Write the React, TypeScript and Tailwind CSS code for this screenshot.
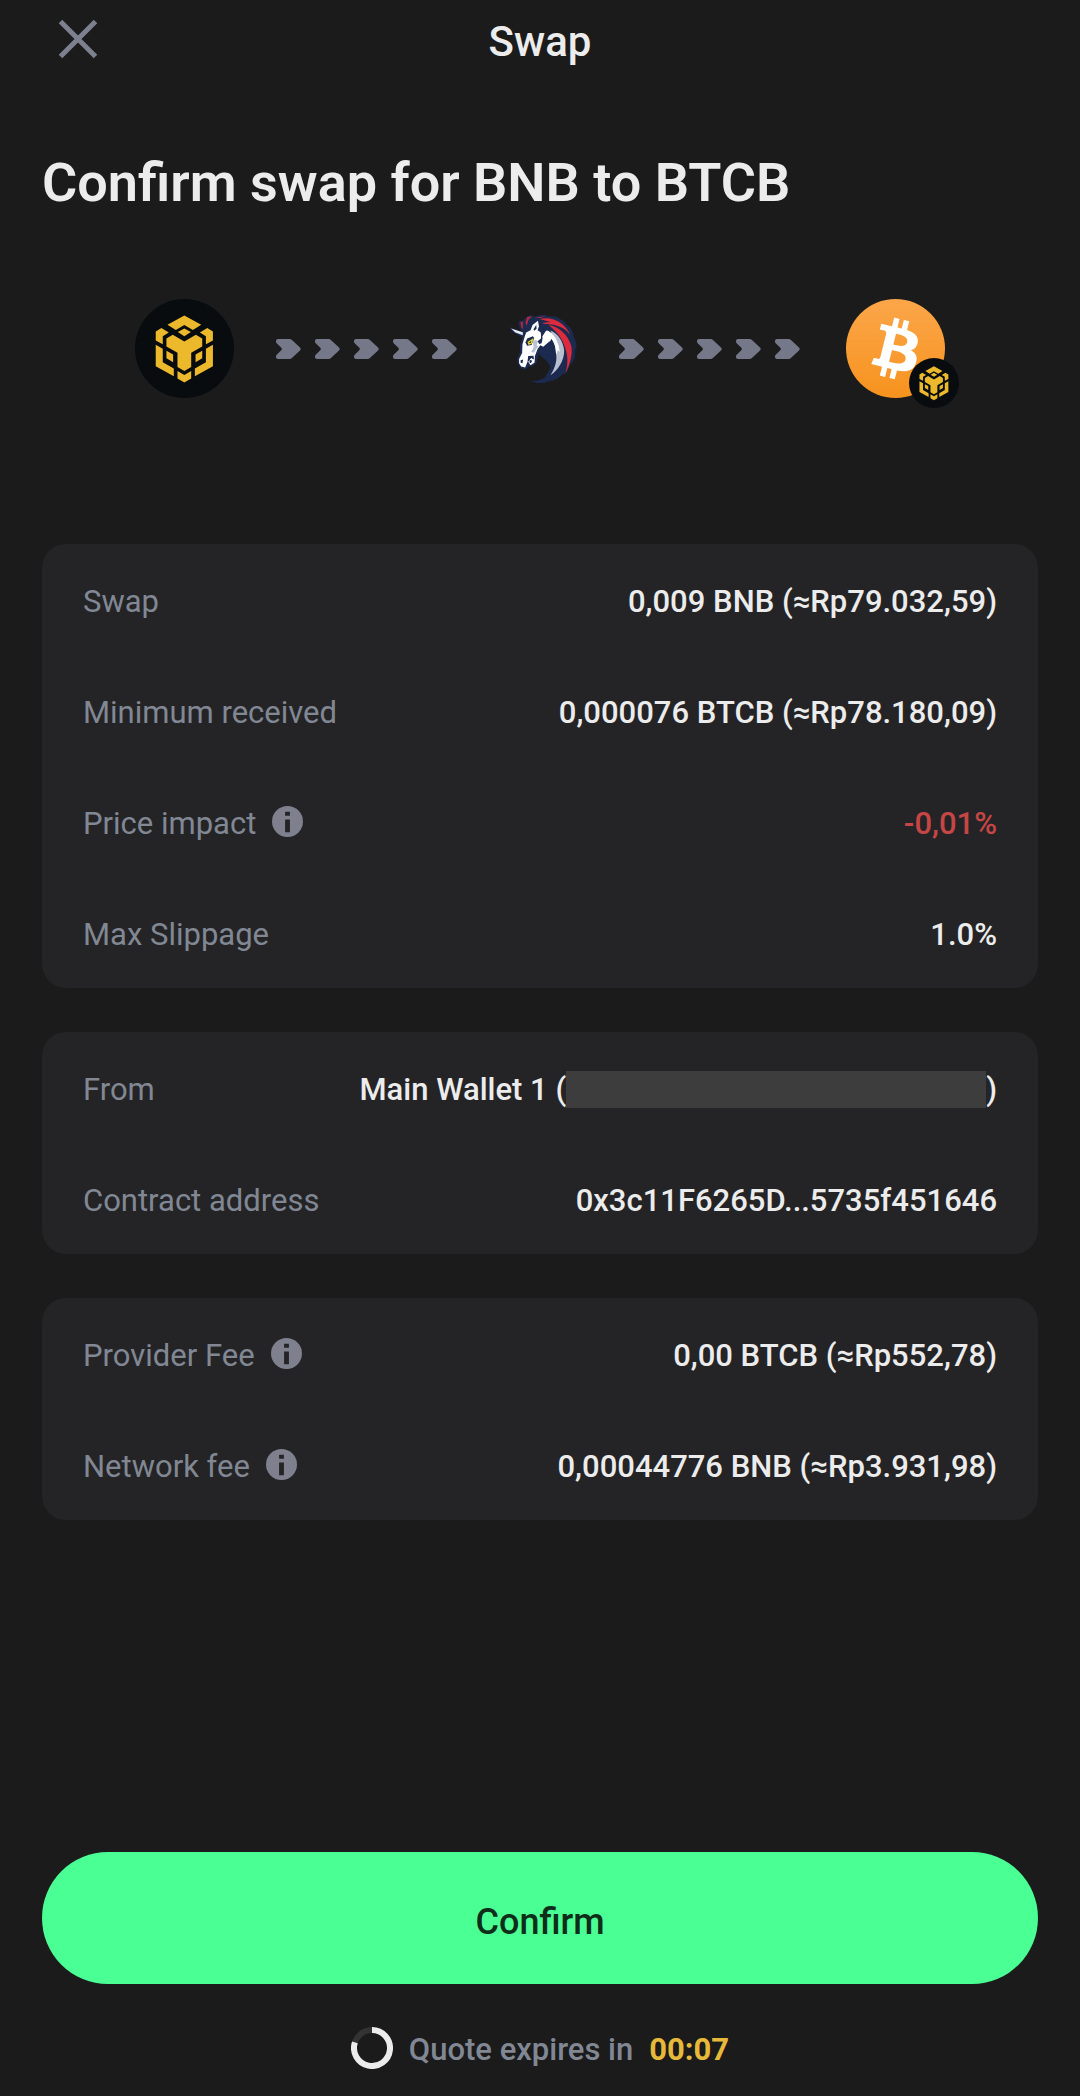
import type { ReactNode } from 'react';

interface DetailRowProps
{
	label: string;
	info?: boolean;
	danger?: boolean;
	children: ReactNode;
}

function BnbMark({ className }: { className: string })
{
	return (
		<svg viewBox="46 56 296 296" className={className} role="img" aria-label="BNB">
			<circle cx="194" cy="204" r="148" fill="#080c0f" />
			<g fill="#ecb92c">
				<path d="M193.500 105 244 133 219 149 193.500 134 168 149 143 133Z" />
				<path d="M193.500 144 213 155 193.500 167 174 155Z" />
				<path d="M125 143 147 156 129 167V191L108 180V153Z" />
				<path d="M262 143 240 156 258 167V191L279 180V153Z" />
				<path d="M159 163 193.500 183 228 163 247 174V198L214 217V259L193.500 271 173 259V217L140 198V174Z" />
				<path d="M108 193 129 205V245L162 264V287L108 257Z" />
				<path d="M279 193 258 205V245L225 264V287L279 257Z" />
				<path d="M140 211 160 222V245L140 233Z" />
				<path d="M247 211 227 222V245L247 233Z" />
				<path d="M173 271 193.500 283 214 271V294L193.500 306 173 294Z" />
			</g>
		</svg>
	);
}

function BitcoinMark({ className }: { className: string })
{
	return (
		<svg viewBox="0 0 32 32" className={className} role="img" aria-label="BTCB">
			<defs>
				<linearGradient id="btc" x1="0" y1="0" x2="0" y2="1">
					<stop offset="0" stopColor="#fba64a" />
					<stop offset="1" stopColor="#f7931e" />
				</linearGradient>
			</defs>
			<circle cx="16" cy="16" r="16" fill="url(#btc)" />
			<path
				fill="#fff"
				d="M23.189 14.02c.314-2.096-1.283-3.223-3.465-3.975l.708-2.84-1.728-.43-.69 2.765c-.454-.114-.92-.22-1.385-.326l.695-2.783L15.596 6l-.708 2.839c-.376-.086-.746-.17-1.104-.26l.002-.009-2.384-.595-.46 1.846s1.283.294 1.256.312c.7.175.826.638.805 1.006l-.806 3.235c.048.012.11.03.18.057l-.183-.045-1.13 4.532c-.086.212-.303.531-.793.41.018.025-1.256-.313-1.256-.313l-.858 1.978 2.25.561c.418.105.828.215 1.231.318l-.715 2.872 1.727.43.708-2.84c.472.127.93.245 1.378.357l-.706 2.828 1.728.43.715-2.866c2.948.558 5.164.333 6.097-2.333.752-2.146-.037-3.385-1.588-4.192 1.13-.26 1.98-1.003 2.207-2.538zm-3.95 5.538c-.533 2.147-4.148.986-5.32.695l.95-3.805c1.172.293 4.929.872 4.37 3.11zm.535-5.569c-.487 1.953-3.495.96-4.47.717l.86-3.45c.975.243 4.118.696 3.61 2.733z"
			/>
		</svg>
	);
}

function UnicornMark({ className }: { className: string })
{
	return (
		<svg viewBox="114 95 220 220" className={className} role="img" aria-label="1inch">
			{/* mane and neck */}
			<path
				fill="#1b2a4e"
				d="M117 139 157 155 148 142 145 126 153 117 153 127 165 112 180 105 194 107 187 112 205 105 232 103 226 107 258 109 288 127 281 126 300 142 311 164 307 162 317 188 318 206 314 203 313 230 303 251 303 244 290 271 280 283 281 276 263 291 243 302 246 297 222 306 200 306 178 299C205 300 221 294 232 282C241 271 243 255 234 248L226 236 214 212 204 220 199 245 188 256 174 258 166 267 151 262 143 249 141 235 149 215 150 190 157 170 130 156Z"
			/>
			<path fill="#1b2a4e" d="M214 180 248 168 264 215 258 262 236 286 222 292 240 262 236 246 206 222Z" />
			{/* red locks */}
			<path fill="#dc2b3c" d="M208 116C247 107 285 127 300 166 294 154 278 141 259 136 244 130 226 134 214 128L240 125Z" />
			<path fill="#dc2b3c" d="M235 134C268 140 291 163 302 195 307 219 299 249 285 277 293 248 292 224 284 202 276 174 258 153 235 134Z" />
			<path fill="#b52940" d="M151 126 158 122 158 146 154 142Z" />
			<path fill="#b52940" d="M171 110 185 108 175 118 170 136 166 127Z" />
			<path fill="#b52940" d="M194 111 225 108 211 113Z" />
			{/* neck highlight */}
			<path fill="#b7bfd1" d="M240 150C262 158 278 182 281 209 282 239 262 270 240 283 256 260 261 235 256 215 254 190 252 172 240 150Z" />
			<path fill="#fff" d="M228 149C245 154 258 172 264 194L268 214 262 208 258 222C256 200 252 184 240 172Z" />
			{/* head */}
			<path fill="#e8ebf2" d="M123 144 158 155 158 164 136 156Z" />
			<path
				fill="#fff"
				d="M203 121 206 137 202 149 211 155 214 171 227 151 245 159 241 180 228 190 219 198 210 194 202 205 194 226 193 245 181 253 174 243 183 232 191 236 190 225 174 226 172 243 165 260 153 257 147 247 147 235 156 217 157 191 164 167 168 156 181 149 187 134Z"
			/>
			<path fill="#bac3d6" d="M188 181 190 200 183 214 191 216 205 195 199 195 203 182 196 178Z" />
			<path fill="#1b2a4e" d="M198 133 199 145 192 151 190 146ZM212 157 217 172 214 188 207 190 202 182 212 174Z" />
			<path fill="#1b2a4e" d="M171 174 188 167 192 172 184 193 171 195 166 186Z" />
			<path fill="#e1d32f" d="M172 184 190 172 186 189 175 193Z" />
			<path fill="#1b2a4e" d="M176 187 182 181 182 187ZM151 239 159 236 157 247 152 246ZM178 237 186 240 182 247 178 245Z" />
		</svg>
	);
}

function Arrows()
{
	return (
		<div className="flex gap-[14px]">
			{[0, 1, 2, 3, 4].map((i) => (
				<svg key={i} viewBox="0 0 25 20" className="h-5 w-[25px]" aria-hidden="true">
					<path
						d="M2 0H13.500Q15 0 16.200 1.200L24 8.600Q25.400 10 24 11.400L16.200 18.800Q15 20 13.500 20H2Q0 20 0 18.300V17.200Q0 16.400 .7 15.700L5.300 11.200Q6.300 10 5.300 8.800L.7 4.300Q0 3.600 0 2.800V1.700Q0 0 2 0Z"
						fill="#757888"
					/>
				</svg>
			))}
		</div>
	);
}

function DetailRow({ label, info, danger, children }: DetailRowProps)
{
	return (
		<div className="flex h-[111px] items-center justify-between gap-4">
			<dt className="flex items-center gap-4 text-[#818894]">
				<span className="pt-1">{label}</span>
				{info && (
					<button type="button" aria-label={`About ${label}`}>
						<svg viewBox="0 0 32 32" className="size-[31px]" aria-hidden="true">
							<circle cx="16" cy="16" r="16" fill="#7e808d" />
							<path d="M13.500 6h5v4h-5zM13.500 14h5v13h-5z" fill="#242426" />
						</svg>
					</button>
				)}
			</dt>
			<dd className={danger ? 'pt-1 font-medium text-[#c64545]' : 'flex items-center pt-1 font-medium text-[#ececec]'}>
				{children}
			</dd>
		</div>
	);
}

function Card({ children }: { children: ReactNode })
{
	return <dl className="rounded-3xl bg-[#242426] px-[41px] text-[31px] leading-10">{children}</dl>;
}

export default function App()
{
	return (
		<div className="flex min-h-screen flex-col bg-[#1b1b1b] px-[42px] font-['Roboto','Noto_Sans',sans-serif] text-[#ececec]">
			<header className="grid h-[84px] grid-cols-[1fr_auto_1fr] items-center">
				<button type="button" aria-label="Close" className="justify-self-start px-4 pb-1.5">
					<svg viewBox="0 0 40 40" className="size-10" fill="none" stroke="#7d808e" strokeWidth="5" aria-hidden="true">
						<path d="M2.500 2.500 37.500 37.500M37.500 2.500 2.500 37.500" />
					</svg>
				</button>
				<span className="text-[42px] leading-[52px] font-medium">Swap</span>
			</header>

			<h1 className="mt-[67px] text-[54px] leading-[64px] font-semibold">Confirm swap for BNB to BTCB</h1>

			<div className="mx-auto mt-[84px] grid w-full max-w-[810px] grid-cols-[141fr_195fr_148fr_195fr_131fr] items-center">
				<BnbMark className="size-[99px]" />
				<Arrows />
				<UnicornMark className="size-[74px] justify-self-center" />
				<Arrows />
				<div className="relative justify-self-end">
					<BitcoinMark className="size-[99px]" />
					<BnbMark className="absolute -right-[14px] -bottom-[10px] size-[50px]" />
				</div>
			</div>

			<main className="mt-[146px] flex flex-col gap-[44px]">
				<Card>
					<DetailRow label="Swap">0,009 BNB (≈Rp79.032,59)</DetailRow>
					<DetailRow label="Minimum received">0,000076 BTCB (≈Rp78.180,09)</DetailRow>
					<DetailRow label="Price impact" info danger>-0,01%</DetailRow>
					<DetailRow label="Max Slippage">1.0%</DetailRow>
				</Card>

				<Card>
					<DetailRow label="From">
						Main Wallet 1 (
						<span className="h-[37px] w-[420px] bg-[#3d3d3d]" />
						)
					</DetailRow>
					<DetailRow label="Contract address">0x3c11F6265D...5735f451646</DetailRow>
				</Card>

				<Card>
					<DetailRow label="Provider Fee" info>0,00 BTCB (≈Rp552,78)</DetailRow>
					<DetailRow label="Network fee" info>0,00044776 BNB (≈Rp3.931,98)</DetailRow>
				</Card>
			</main>

			<footer className="mt-auto flex flex-col items-center pb-6">
				<button type="button" className="h-[132px] w-full rounded-full bg-[#4aff93] pt-2 text-[36px] font-medium text-[#0f2e19]">
					Confirm
				</button>
				<div className="mt-10 flex h-12 items-center gap-4 text-[31px] leading-10">
					<svg viewBox="0 0 42 42" className="size-[42px]" fill="none" strokeWidth="6" aria-hidden="true">
						<circle cx="21" cy="21" r="18" stroke="#333" />
						<path d="M21 3A18 18 0 1 1 3.900 15.400" stroke="#ececec" />
					</svg>
					<span className="pt-1 font-medium text-[#818894]">Quote expires in</span>
					<time className="pt-1 font-bold text-[#e6b93a]">00:07</time>
				</div>
			</footer>
		</div>
	);
}
